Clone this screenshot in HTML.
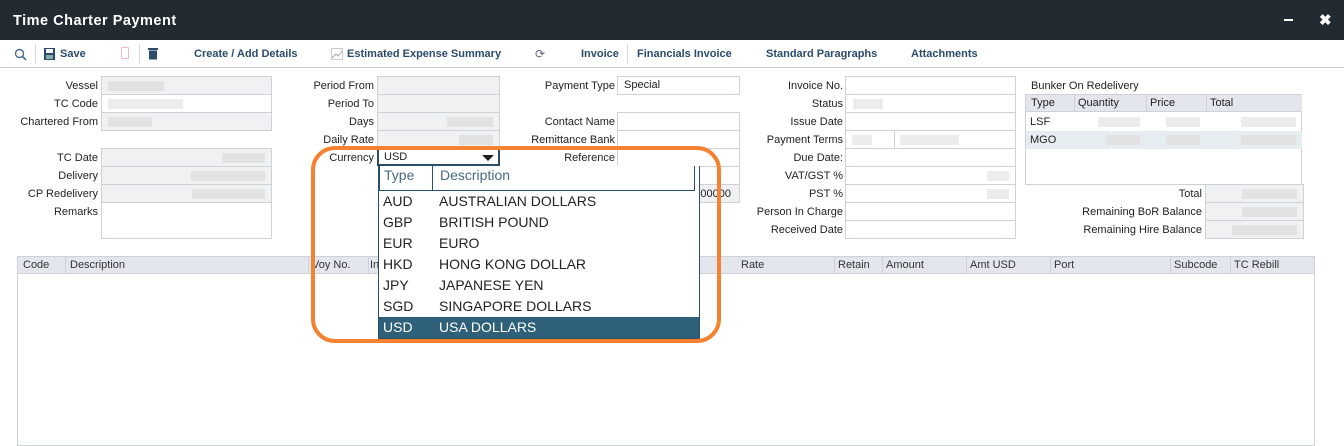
<!DOCTYPE html>
<html><head><meta charset="utf-8"><style>
*{margin:0;padding:0;box-sizing:border-box}
body{width:1344px;height:437px;overflow:hidden;background:#fff;font-family:"Liberation Sans",Arial,sans-serif;font-size:11px;color:#222;position:relative}
.a{position:absolute}
.title{left:0;top:0;width:1344px;height:40px;background:#222a32;color:#fff;font-weight:bold;font-size:14.5px;letter-spacing:.5px;padding:13px 0 0 13px}
.tb{top:40px;height:28px;width:1344px;border-bottom:1px solid #c8cdd6}
.tbt{top:48px;font-weight:bold;color:#2b4b6b;font-size:11px}
.sep{top:44px;width:1px;height:20px;background:#d5d9de}
.lb{text-align:right;font-size:11px;color:#222;height:18px;line-height:19px}
.in{border:1px solid #cdd2d8;height:19px;background:#fff}
.g{background:#eff1f3}
.bl{position:absolute;height:10px;background:#e2e2e2;top:4px}
.th{background:#e4e6ee;height:17px;top:257px;border-bottom:1px solid #cdd2d8}
.th span{position:absolute;top:2px;font-size:11px;color:#333}
.cl{position:absolute;top:0;width:1px;height:16px;background:#cdd2d8}
.dd div.r{height:21px;line-height:21px;font-size:14px;color:#222;position:relative}
.dd div.r span{position:absolute;left:4px}
.dd div.r b{position:absolute;left:60px;font-weight:normal}
</style></head><body>
<div class="a title">Time Charter Payment</div>
<div class="a" style="left:1284px;top:19px;width:9px;height:2px;background:#fff"></div>
<div class="a" style="left:1319px;top:11px;color:#fff;font-size:15px;font-weight:bold">✖</div>
<div class="a tb"></div>
<svg class="a" style="left:14px;top:48px" width="14" height="14" viewBox="0 0 14 14"><circle cx="5.5" cy="5.5" r="4" fill="none" stroke="#4a6a8a" stroke-width="1.4"/><line x1="8.5" y1="8.5" x2="12" y2="12" stroke="#4a6a8a" stroke-width="1.6"/></svg>
<div class="a sep" style="left:35px"></div>
<svg class="a" style="left:44px;top:48px" width="11" height="12" viewBox="0 0 11 12"><rect x="0" y="0" width="11" height="12" fill="#2b4b6b"/><rect x="2" y="1" width="7" height="4" fill="#fff"/><rect x="2" y="7" width="7" height="4" fill="#8aa"/></svg>
<div class="a tbt" style="left:60px">Save</div>
<div class="a" style="left:121px;top:47px;width:8px;height:12px;border:1px solid #f0b8c8;border-radius:1px"></div>
<div class="a sep" style="left:139px"></div>
<svg class="a" style="left:148px;top:47px" width="10" height="13" viewBox="0 0 10 13"><rect x="0" y="1" width="10" height="2" fill="#2b4b6b"/><rect x="1" y="3.5" width="8" height="9" fill="#2b4b6b"/></svg>
<div class="a tbt" style="left:194px">Create / Add Details</div>
<svg class="a" style="left:331px;top:48px" width="12" height="12"><rect x=".5" y=".5" width="11" height="11" fill="none" stroke="#ccc"/><polyline points="1,10 5,6 7,8 11,3" fill="none" stroke="#aaa"/></svg>
<div class="a tbt" style="left:347px">Estimated Expense Summary</div>
<div class="a" style="left:535px;top:47px;color:#667;font-size:12px">⟳</div>
<div class="a tbt" style="left:581px">Invoice</div>
<div class="a sep" style="left:627px"></div>
<div class="a tbt" style="left:637px">Financials Invoice</div>
<div class="a tbt" style="left:766px">Standard Paragraphs</div>
<div class="a tbt" style="left:911px">Attachments</div>

<div class="a lb" style="left:0;width:98px;top:77px">Vessel</div>
<div class="a lb" style="left:0;width:98px;top:95px">TC Code</div>
<div class="a lb" style="left:0;width:98px;top:113px">Chartered From</div>
<div class="a lb" style="left:0;width:98px;top:149px">TC Date</div>
<div class="a lb" style="left:0;width:98px;top:167px">Delivery</div>
<div class="a lb" style="left:0;width:98px;top:185px">CP Redelivery</div>
<div class="a lb" style="left:0;width:98px;top:203px">Remarks</div>
<div class="a in g" style="left:101px;top:76px;width:171px"><i class="bl" style="left:6px;width:56px"></i></div>
<div class="a in" style="left:101px;top:94px;width:171px"><i class="bl" style="left:6px;width:75px;background:#ececec"></i></div>
<div class="a in g" style="left:101px;top:112px;width:171px"><i class="bl" style="left:6px;width:44px"></i></div>
<div class="a in g" style="left:101px;top:148px;width:171px"><i class="bl" style="left:120px;width:43px"></i></div>
<div class="a in g" style="left:101px;top:166px;width:171px"><i class="bl" style="left:89px;width:74px"></i></div>
<div class="a in g" style="left:101px;top:184px;width:171px"><i class="bl" style="left:90px;width:73px"></i></div>
<div class="a in" style="left:101px;top:202px;width:171px;height:37px"></div>

<div class="a lb" style="left:280px;width:94px;top:77px">Period From</div>
<div class="a lb" style="left:280px;width:94px;top:95px">Period To</div>
<div class="a lb" style="left:280px;width:94px;top:113px">Days</div>
<div class="a lb" style="left:280px;width:94px;top:131px">Daily Rate</div>
<div class="a lb" style="left:280px;width:94px;top:149px">Currency</div>
<div class="a in g" style="left:377px;top:76px;width:123px"></div>
<div class="a in g" style="left:377px;top:94px;width:123px"></div>
<div class="a in g" style="left:377px;top:112px;width:123px"><i class="bl" style="left:69px;width:46px"></i></div>
<div class="a in g" style="left:377px;top:130px;width:123px"><i class="bl" style="left:81px;width:34px"></i></div>
<div class="a" style="left:377px;top:148px;width:123px;height:18px;border:2px solid #2a5068;background:#fff;font-size:11px;padding:1px 5px">USD</div>
<div class="a" style="left:482px;top:155px;width:0;height:0;border-left:6px solid transparent;border-right:6px solid transparent;border-top:6px solid #222"></div>

<div class="a lb" style="left:500px;width:115px;top:77px">Payment Type</div>
<div class="a lb" style="left:500px;width:115px;top:113px">Contact Name</div>
<div class="a lb" style="left:500px;width:115px;top:131px">Remittance Bank</div>
<div class="a lb" style="left:500px;width:115px;top:149px">Reference</div>
<div class="a in" style="left:617px;top:76px;width:123px;padding:2px 6px">Special</div>
<div class="a in" style="left:617px;top:112px;width:123px"></div>
<div class="a in" style="left:617px;top:130px;width:123px"></div>
<div class="a in" style="left:617px;top:148px;width:123px"></div>
<div class="a in" style="left:617px;top:166px;width:123px"></div>
<div class="a in g" style="left:617px;top:184px;width:123px;text-align:right;padding:3px 8px 0 0">000000</div>

<div class="a lb" style="left:740px;width:103px;top:77px">Invoice No.</div>
<div class="a lb" style="left:740px;width:103px;top:95px">Status</div>
<div class="a lb" style="left:740px;width:103px;top:113px">Issue Date</div>
<div class="a lb" style="left:740px;width:103px;top:131px">Payment Terms</div>
<div class="a lb" style="left:740px;width:103px;top:149px">Due Date:</div>
<div class="a lb" style="left:740px;width:103px;top:167px">VAT/GST %</div>
<div class="a lb" style="left:740px;width:103px;top:185px">PST %</div>
<div class="a lb" style="left:740px;width:103px;top:203px">Person In Charge</div>
<div class="a lb" style="left:740px;width:103px;top:221px">Received Date</div>
<div class="a in" style="left:845px;top:76px;width:171px"></div>
<div class="a in" style="left:845px;top:94px;width:171px"><i class="bl" style="left:7px;width:30px;background:#ececec"></i></div>
<div class="a in" style="left:845px;top:112px;width:171px"></div>
<div class="a in" style="left:845px;top:130px;width:171px"><i class="bl" style="left:6px;width:20px;background:#ececec"></i><i style="position:absolute;left:48px;top:0;width:1px;height:17px;background:#cdd2d8"></i><i class="bl" style="left:54px;width:59px;background:#ececec"></i></div>
<div class="a in" style="left:845px;top:148px;width:171px"></div>
<div class="a in" style="left:845px;top:166px;width:171px"><i class="bl" style="left:141px;width:22px;background:#ececec"></i></div>
<div class="a in" style="left:845px;top:184px;width:171px"><i class="bl" style="left:141px;width:22px;background:#ececec"></i></div>
<div class="a in" style="left:845px;top:202px;width:171px"></div>
<div class="a in" style="left:845px;top:220px;width:171px"></div>

<div class="a" style="left:1031px;top:80px;font-size:11px">Bunker On Redelivery</div>
<div class="a" style="left:1025px;top:94px;width:277px;height:91px;border:1px solid #cdd2d8"></div>
<div class="a" style="left:1026px;top:95px;width:276px;height:17px;background:#e4e6ee;border-bottom:1px solid #cdd2d8">
<span class="a" style="left:5px;top:2px">Type</span><i class="cl" style="left:48px"></i>
<span class="a" style="left:52px;top:2px">Quantity</span><i class="cl" style="left:120px"></i>
<span class="a" style="left:124px;top:2px">Price</span><i class="cl" style="left:180px"></i>
<span class="a" style="left:184px;top:2px">Total</span></div>
<div class="a" style="left:1026px;top:113px;width:276px;height:18px">
<span class="a" style="left:4px;top:3px;font-size:11px">LSF</span><i class="bl" style="left:72px;width:42px;background:#ececec"></i><i class="bl" style="left:140px;width:34px;background:#ececec"></i><i class="bl" style="left:215px;width:55px;background:#ececec"></i></div>
<div class="a" style="left:1026px;top:131px;width:276px;height:18px;background:#e6edf1">
<span class="a" style="left:4px;top:3px;font-size:11px">MGO</span><i class="bl" style="left:80px;width:34px"></i><i class="bl" style="left:140px;width:34px"></i><i class="bl" style="left:215px;width:55px"></i></div>
<div class="a lb" style="left:1030px;width:172px;top:185px">Total</div>
<div class="a lb" style="left:1030px;width:172px;top:203px">Remaining BoR Balance</div>
<div class="a lb" style="left:1030px;width:172px;top:221px">Remaining Hire Balance</div>
<div class="a in g" style="left:1205px;top:184px;width:99px"><i class="bl" style="left:36px;width:55px"></i></div>
<div class="a in g" style="left:1205px;top:202px;width:99px"><i class="bl" style="left:36px;width:55px"></i></div>
<div class="a in g" style="left:1205px;top:220px;width:99px"><i class="bl" style="left:26px;width:65px"></i></div>

<div class="a" style="left:17px;top:256px;width:1298px;height:190px;border:1px solid #cdd2d8"></div>
<div class="a th" style="left:18px;width:1296px">
<span style="left:5px">Code</span><i class="cl" style="left:47px"></i>
<span style="left:52px">Description</span><i class="cl" style="left:290px"></i>
<span style="left:294px">Voy No.</span><i class="cl" style="left:350px"></i>
<span style="left:352px">In</span>
<span style="left:723px">Rate</span><i class="cl" style="left:816px"></i>
<span style="left:820px">Retain</span><i class="cl" style="left:864px"></i>
<span style="left:868px">Amount</span><i class="cl" style="left:948px"></i>
<span style="left:952px">Amt USD</span><i class="cl" style="left:1032px"></i>
<span style="left:1036px">Port</span><i class="cl" style="left:1152px"></i>
<span style="left:1156px">Subcode</span><i class="cl" style="left:1212px"></i>
<span style="left:1216px">TC Rebill</span></div>

<div class="a dd" style="left:378px;top:166px;width:322px;height:173px;background:#fff;border:1px solid #2a5068;border-top:none">
<div style="position:relative;height:25px;border:1px solid #2a5068;border-top:none;margin-right:4px;font-size:14px;color:#4a6a84">
<span class="a" style="left:4px;top:1px">Type</span><i class="a" style="left:52px;top:0;width:1px;height:24px;background:#2a5068"></i><span class="a" style="left:60px;top:1px">Description</span></div>
<div class="r"><span>AUD</span><b>AUSTRALIAN DOLLARS</b></div>
<div class="r"><span>GBP</span><b>BRITISH POUND</b></div>
<div class="r"><span>EUR</span><b>EURO</b></div>
<div class="r"><span>HKD</span><b>HONG KONG DOLLAR</b></div>
<div class="r"><span>JPY</span><b>JAPANESE YEN</b></div>
<div class="r"><span>SGD</span><b>SINGAPORE DOLLARS</b></div>
<div class="r" style="background:#2e6079;color:#fff"><span>USD</span><b>USA DOLLARS</b></div>
</div>
<div class="a" style="left:311px;top:146px;width:410px;height:197px;border:4px solid #f58230;border-radius:24px"></div>
</body></html>
